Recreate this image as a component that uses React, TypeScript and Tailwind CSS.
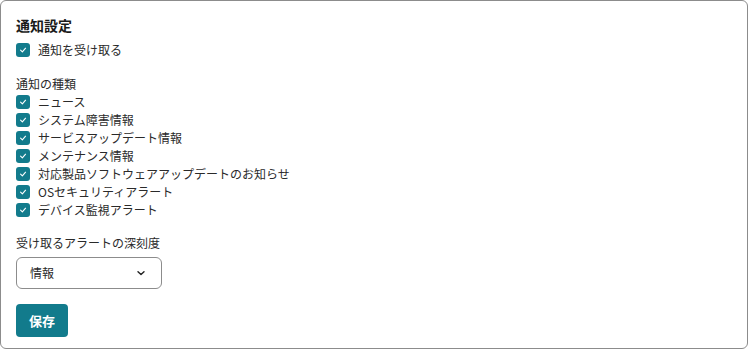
import React from 'react';

const types = [
  'ニュース',
  'システム障害情報',
  'サービスアップデート情報',
  'メンテナンス情報',
  '対応製品ソフトウェアアップデートのお知らせ',
  'OSセキュリティアラート',
  'デバイス監視アラート',
];

function Check({ label }: { label: string }) {
  return (
    <label className="flex items-center gap-[8px] h-[18px]">
      <span className="w-[14px] h-[14px] rounded-[3px] bg-[#127b8c] flex items-center justify-center shrink-0">
        <svg width="8" height="8" viewBox="0 0 10 10" fill="none">
          <path d="M2 5.2 L4.2 7.3 L8.2 2.8" stroke="white" strokeWidth="1.4" strokeLinecap="round" strokeLinejoin="round" />
        </svg>
      </span>
      <span className="text-[12px] leading-[18px] text-[#2a2a2a]">{label}</span>
    </label>
  );
}

export default function App() {
  return (
    <div className="w-[750px] h-[353px] bg-white" style={{ fontFamily: '"Noto Sans CJK JP", "Noto Sans", sans-serif' }}>
      <div className="w-[748px] h-[349px] border border-[#8c8c8c] rounded-[6px] bg-white px-[15px] pt-[14px]">
        <h2 className="text-[14px] leading-[20px] font-bold text-[#1a1a1a]">通知設定</h2>
        <div className="mt-[6px]">
          <Check label="通知を受け取る" />
        </div>
        <p className="mt-[16px] text-[12px] leading-[18px] text-[#2a2a2a]">通知の種類</p>
        <div className="flex flex-col">
          {types.map((t) => (
            <Check key={t} label={t} />
          ))}
        </div>
        <p className="mt-[15px] text-[12px] leading-[18px] text-[#2a2a2a]">受け取るアラートの深刻度</p>
        <div className="mt-[5px] w-[146px] h-[32px] border border-[#8c8c8c] rounded-[6px] flex items-center justify-between pl-[13px] pr-[15px]">
          <span className="text-[12px] text-[#2a2a2a]">情報</span>
          <svg width="10" height="10" viewBox="0 0 10 10" fill="none">
            <path d="M2 3.8 L5 6.6 L8 3.8" stroke="#222" strokeWidth="1.4" strokeLinecap="round" strokeLinejoin="round" />
          </svg>
        </div>
        <button className="mt-[15px] h-[33px] px-[13px] rounded-[4px] bg-[#127b8c] text-white text-[13px] font-bold">
          保存
        </button>
      </div>
    </div>
  );
}
